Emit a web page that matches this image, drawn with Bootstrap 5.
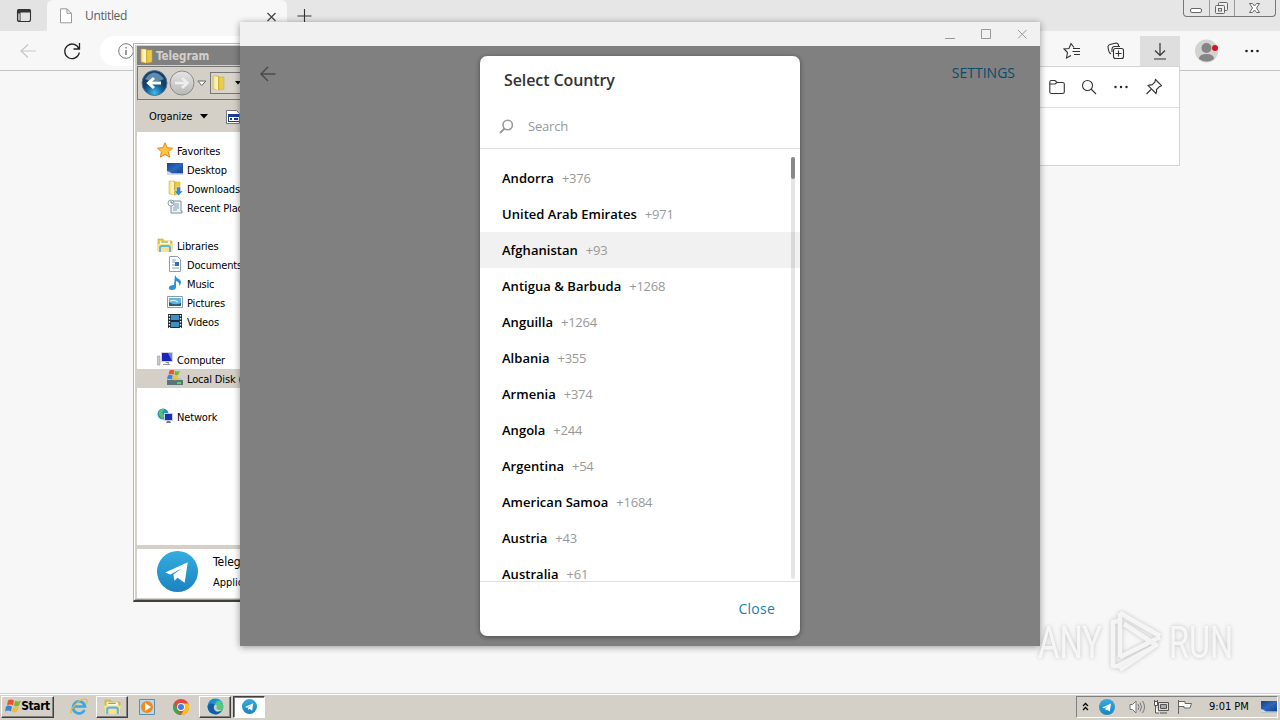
<!DOCTYPE html>
<html lang="en">
<head>
<meta charset="utf-8">
<meta name="viewport" content="width=device-width, initial-scale=1">
<title>Select Country</title>
<link href="https://cdn.jsdelivr.net/npm/bootstrap@5.3.0/dist/css/bootstrap.min.css" rel="stylesheet">
<style>
body{width:1280px;height:720px;background:#f7f7f7;font-family:"Open Sans",sans-serif;font-size:13px;line-height:1.2;color:#000}
svg{display:block;flex:none}
.ln{fill:none;stroke:#333;stroke-width:1.1}
/* browser */
.tabstrip{height:31px;background:#e6e6e6}
.tab-left{width:47px;background:#e3e3e3;border-bottom-right-radius:5px}
.tab-active{width:240px;background:#f7f7f7;border-radius:6px 6px 0 0;color:#5c5c5c;font-size:12px;padding:1px 10px 0 12px}
.tab-active span{letter-spacing:-.35px}
.caps{width:93px;height:17px;margin-right:4px;border:1px solid #777;border-top:0;border-radius:0 0 4px 4px}
.caps>div+div{border-left:1px solid #999}
.toolbar{height:40px;background:#f7f7f7;border-bottom:1px solid #c4c4c4}
.addr{width:800px;height:30px;border-radius:15px;background:#fff;padding-left:18px}
.dl-btn{width:40px;height:30px;background:#dedede}
.flyout{right:100px;top:66px;width:300px;height:100px;background:#fff;border:1px solid #d4d4d4}
.flyout-head{height:41px;border-bottom:1px solid #e0e0e0;padding:0 16px 1px 0}
/* file manager */
.explorer{left:133px;top:43px;width:400px;height:559px;background:#d4d0c8;border:1px solid #b9b6b0;border-bottom:2px solid #404040;padding:2px;font-family:"DejaVu Sans Condensed","DejaVu Sans",sans-serif;font-size:11px;box-shadow:inset 1px 1px #fff,inset 0 -1px #999}
.ex-title{height:19px;background:#808080;color:#d4d0c8;font:bold 11.500px "DejaVu Sans Condensed","DejaVu Sans",sans-serif;padding-left:2px;margin-left:1px}
.ex-nav{height:34px;margin:1px 0 0 1px;border:1px solid #777;border-right:0;padding-left:3px}
.ex-crumb{width:80px;height:22px;border:1px solid #777;border-right:0;background:#d8d4cc;margin-left:3px}
.ex-cmd{height:32px;padding:1px 0 0 13px}
.ex-pane{height:413px;background:#fff;padding-top:9px;margin-left:1px}
.ex-row{height:19px;letter-spacing:-.15px;white-space:nowrap}
.ex-row.sub-row{padding-left:30px}.ex-row.top-row{padding-left:20px}
.ex-row span{margin-left:4px;padding-top:2px}
.ex-row svg{margin-top:-1px}
.ex-row.picked{background:#d4d0c8}
.ex-det{height:49px;background:#fff;margin:4px 0 0 1px;padding-left:20px}
/* messenger */
.tg{left:240px;top:22px;width:800px;height:624px;background:#808080;box-shadow:0 1px 7px rgba(0,0,0,.4)}
.tg-title{height:24px;background:#f1f1f1;padding-right:9px}
.tg-set{color:#0b4a6a;font-size:14px;font-weight:500}
.picker{left:240px;top:34px;width:320px;height:580px;border-radius:7px;background:#fff;box-shadow:0 1px 5px rgba(0,0,0,.45)}
.pk-title{height:49px;padding-left:24px;font-size:16px;font-weight:600;letter-spacing:-.1px;color:#333}
.pk-search{height:44px;border-bottom:1px solid #e0e0e0;padding:0 0 0 19px;color:#999;letter-spacing:-.2px}
.pk-list{height:432px;padding-top:11px;overflow:hidden}
.pk-row{height:36px;padding:2px 0 0 22px;font-weight:600;letter-spacing:.03px;white-space:nowrap}
.pk-row small{font-size:13px;font-weight:400;letter-spacing:-.25px;color:#999;margin-left:8px}
.pk-row.hov{background:#f1f1f1}
.pk-bar{right:5px;top:8px;width:4px;height:422px;border-radius:2px;background:rgba(0,0,0,.1)}
.pk-bar div{height:22px;border-radius:2px;background:#888}
.pk-foot{height:55px;border-top:1px solid #e0e0e0;color:#1680b5;font-size:14px;font-weight:500;letter-spacing:.25px;padding-right:25px}
/* taskbar */
.taskbar{height:27px;background:#d4d0c8;border-top:1px solid #d4d0c8;box-shadow:inset 0 1px #fff;font-family:"DejaVu Sans Condensed","DejaVu Sans",sans-serif;font-size:11px;padding:1px 2px 2px 1px}
.tk{border:1px solid;border-color:#fff #404040 #404040 #fff;box-shadow:inset -1px -1px #808080;height:22px;width:32px}
.tk.on{background:#fff;border-color:#404040 #fff #fff #404040;box-shadow:inset 1px 1px #808080;margin-left:2px}
.tk.start{width:53px;font-weight:bold;font-size:12px;letter-spacing:-.4px}
.tray{width:202px;height:22px;border:1px solid;border-color:#808080 #fff #fff #808080;padding-left:5px}
.mark-any{left:1032px;top:604px}
</style>
</head>
<body class="position-relative overflow-hidden d-flex flex-column m-0">
<svg width="0" height="0" class="position-absolute">
<defs>
<linearGradient id="tgG" x2="0" y2="1"><stop stop-color="#35ade1"/><stop offset="1" stop-color="#1b83bf"/></linearGradient>
<linearGradient id="fo"><stop stop-color="#f7dc6b"/><stop offset=".5" stop-color="#fff2ae"/><stop offset="1" stop-color="#d9ad29"/></linearGradient>
<linearGradient id="scr" x2="1" y2="1"><stop stop-color="#163f86"/><stop offset=".5" stop-color="#2c68bd"/><stop offset="1" stop-color="#173f83"/></linearGradient>
<radialGradient id="bk" cy=".9"><stop stop-color="#3fc0ea"/><stop offset=".6" stop-color="#17679f"/><stop offset="1" stop-color="#123f6c"/></radialGradient>
<linearGradient id="gr" x2="0" y2="1"><stop stop-color="#e4e4e4"/><stop offset="1" stop-color="#b8b8b8"/></linearGradient>
<linearGradient id="edge" x2="1" y2="1"><stop stop-color="#1477c9"/><stop offset=".55" stop-color="#1ba8df"/><stop offset="1" stop-color="#58cf67"/></linearGradient>
<symbol id="plane" viewBox="0 0 40 40"><circle cx="20" cy="20" r="20" fill="url(#tgG)"/><path d="M8 21 30 11 27 31 20 26 17 29 16 23 24 17 13 23Z" fill="#fff"/></symbol>
<symbol id="folder" viewBox="0 0 16 16"><path d="M2 1h5l1 1v13l-6-1Z" fill="url(#fo)" stroke="#cfa52c" stroke-width=".5"/><path d="M8 2h5v12l-5 1Z" fill="#eccb4c" stroke="#cfa52c" stroke-width=".5"/><path d="M5 2h2v13l-2-1Z" fill="#fff6c5"/></symbol>
<symbol id="lib" viewBox="0 0 16 16"><path d="M1 2h5l1 2h8v10H1Z" fill="#ecca5a" stroke="#c79b2c" stroke-width=".6"/><path d="M3 4h10v4H3Z" fill="#fff8dc"/><path d="M4 5h7" stroke="#58a94b"/><path d="M0 7h16l-1 8H1Z" fill="#f8e28b"/><path d="M3 15v-4q0-2 2-2h6q2 0 2 2v4" fill="none" stroke="#63b4df" stroke-width="2"/></symbol>
<symbol id="screen" viewBox="0 0 16 14"><path d="M0 1h16v10.500H0Z" fill="url(#scr)"/><path d="M0 11.500h16v1H0Z" fill="#9cb8d9"/><path d="m0 9 3 1 2 2H0Z" fill="#c5d9ee"/></symbol>
<symbol id="flag" viewBox="0 0 16 16"><path d="M3 2q3-2 6 0L8 7Q5 5 2 7Z" fill="#e8542f"/><path d="M10 2q3 2 6 0l-2 5q-3 2-5 0Z" fill="#78b833"/><path d="M1 8q3-2 6 0l-1 5Q3 11 0 13Z" fill="#3c83d5"/><path d="M8 8q3 2 6 0l-2 5q-2 2-5 0Z" fill="#f6bd2b"/></symbol>
<symbol id="pc" viewBox="0 0 16 16"><path d="M.5 5H3v9H.5Z" fill="#c8ccd5" stroke="#888" stroke-width=".5"/><path d="M4 1h12v10H4Z" fill="#d2d5e0"/><path d="M5 2h10v8H5Z" fill="#1b25bb"/><path d="M11 2h4v8Z" fill="#6c86ee"/><path d="M8 11h4v2H6v1h8" fill="#8a90a5"/></symbol>
</defs></svg>

<div class="tabstrip d-flex flex-shrink-0">
  <div class="tab-left d-flex align-items-center ps-3"><svg width="16" height="15" viewBox="0 0 16 15"><rect x="1.500" y="1.500" width="13" height="12" rx="2" class="ln"/><path d="M1 3Q1 1 3 1h10q2 0 2 2v1.500H4.500v9H3q-2 0-2-2Z" fill="#333"/><path d="M2.300 5.500h1.400v7h-.9q-.5 0-.5-1Z" fill="#e3e3e3"/></svg></div>
  <div class="tab-active d-flex align-items-center"><svg width="14" height="16" viewBox="0 0 14 16" class="me-auto"><path d="M1.500.8h6.500l4.500 4.500v9.500h-11ZM8 .8v4.500h4.500" fill="#fff" stroke="#999"/></svg><span class="flex-grow-1 ps-2 ms-1">Untitled</span><svg width="11" height="11" viewBox="0 0 11 11"><path d="m1.500 2 8 8m0-8-8 8" stroke="#444" stroke-width="1.200"/></svg></div>
  <svg class="align-self-center ms-2" width="18" height="16" viewBox="0 0 18 16"><path d="M9.500 1v14M2.500 8h14" stroke="#333" stroke-width="1.100"/></svg>
  <div class="caps d-flex ms-auto">
    <div style="width:25px"><svg width="24" height="16"><rect x="6.500" y="8.500" width="11" height="4" rx="1.500" fill="#fff" stroke="#666"/></svg></div>
    <div style="width:25px"><svg width="24" height="16" fill="#eee" stroke="#666"><rect x="8.500" y="2.500" width="9" height="8" rx="1"/><rect x="5.500" y="5.500" width="9" height="8" rx="1"/><rect x="8.500" y="8.500" width="3" height="2.500"/></svg></div>
    <div class="flex-grow-1"><svg width="40" height="16"><path d="M14.500 3.500h3l2 2.500 2-2.500h3L21.500 8l3 4.500h-3l-2-2.500-2 2.500h-3l3-4.500Z" fill="#fff" stroke="#666"/></svg></div>
  </div>
</div>
<div class="toolbar d-flex align-items-center flex-shrink-0">
  <svg width="20" height="16" viewBox="0 0 20 16" style="margin-left:19px"><path d="M17 8H2m7-6.500L2 8l7 6.500" fill="none" stroke="#c7c7c7" stroke-width="1.200"/></svg>
  <svg width="20" height="20" viewBox="0 0 20 20" style="margin-left:23px"><path d="M17 8a7.300 7.300 0 1 0 .3 3.500M17.500 2v6h-6" fill="none" stroke="#222" stroke-width="1.300"/></svg>
  <div class="addr d-flex align-items-center" style="margin-left:18px"><svg width="16" height="16" viewBox="0 0 16 16"><circle cx="8" cy="8" r="7.300" fill="none" stroke="#777"/><path d="M8 7v5M8 4v1.500" stroke="#666" stroke-width="1.300"/></svg></div>
  <div class="d-flex align-items-center ms-auto">
    <svg width="18" height="18" viewBox="0 0 18 18" class="ln" style="margin-right:26px"><path d="M11 5.500 8 1.500 6 6.500 1 7l3.500 3.500-1 5.500L8 13.500M10 6.500h7M9.500 9.500H17M11 12.500h6"/></svg>
    <svg width="18" height="18" viewBox="0 0 18 18" class="ln" style="margin-right:15px"><rect x="6.500" y="6.500" width="10" height="10" rx="2"/><path d="M4 12Q2 11 1.500 8L1 4.500Q1 3 3 2.500l6-1.500q2 0 2.500 2v1M5 10V7q0-2 2-2.500h6M11.500 8.500v6M8.500 11.500h6"/></svg>
    <div class="dl-btn d-flex align-items-center justify-content-center"><svg width="16" height="18" viewBox="0 0 16 18"><path d="M8 1v12M3 8.500l5 5 5-5M2 17h12" fill="none" stroke="#333" stroke-width="1.200"/></svg></div>
    <svg width="24" height="24" viewBox="0 0 24 24" style="margin:0 25px 0 15px"><circle cx="11.500" cy="12" r="11.500" fill="#d3d3d0"/><circle cx="11.500" cy="9" r="5" fill="#858585"/><path d="M4 20q0-5 7.500-5t7.500 5q-7 5-15 0Z" fill="#858585"/><circle cx="20" cy="9" r="3" fill="#dc1020"/></svg>
    <svg width="16" height="4" viewBox="0 0 16 4" fill="#222" style="margin-right:20px"><circle cx="2.500" cy="2" r="1.300"/><circle cx="8" cy="2" r="1.300"/><circle cx="13.500" cy="2" r="1.300"/></svg>
  </div>
</div>
<div class="flex-grow-1"></div>

<div class="flyout position-absolute">
  <div class="flyout-head d-flex align-items-center justify-content-end gap-3">
    <svg width="16" height="16" viewBox="0 0 16 16" class="ln"><path d="M.8 4V3q0-1.500 1.500-1.500H6L8 3.500h5.500q1.800 0 1.800 1.500v8q0 1.500-1.800 1.500h-11Q.8 14.500.8 13ZM1 5h5l2-1.500"/></svg>
    <svg width="16" height="16" viewBox="0 0 16 16" class="ln"><circle cx="6.500" cy="6.500" r="5"/><path d="m10 10 5 5"/></svg>
    <svg width="16" height="4" viewBox="0 0 16 4" fill="#222"><circle cx="2.500" cy="2" r="1.200"/><circle cx="8" cy="2" r="1.200"/><circle cx="13.500" cy="2" r="1.200"/></svg>
    <svg width="18" height="18" viewBox="0 0 18 18" class="ln"><path d="m10.500 1.500 6 6q-.5 1-2 1l-3 3q.5 2-.5 4l-8-8q2-1 4-.5l3-3q0-1.500.5-2.500ZM6 11.500l-4.500 4.500"/></svg>
  </div>
</div>

<div class="explorer position-absolute">
  <div class="ex-title d-flex align-items-center"><svg width="16" height="16"><use href="#folder"/></svg><span style="margin-left:1px">Telegram</span></div>
  <div class="ex-nav d-flex align-items-center">
    <svg width="54" height="28" viewBox="0 0 54 28"><circle cx="13.500" cy="14" r="12.500" fill="url(#bk)" stroke="#54738a"/><path d="M4 10Q13-3 23 10q-10 5-19 0" fill="#9cc9e0" opacity=".55"/><path d="M20 14H8m5-5-5.500 5 5.500 5" fill="none" stroke="#fff" stroke-width="3"/><circle cx="41" cy="14" r="12" fill="url(#gr)" stroke="#8b8b8b"/><path d="M34 14h12m-5-5 5.500 5-5.500 5" fill="none" stroke="#eee" stroke-width="2.500"/></svg>
    <svg width="10" height="7" viewBox="0 0 10 7" style="margin-left:2px"><path d="M.8 1h8L4.800 5.500Z" fill="#fff" stroke="#666"/></svg>
    <div class="ex-crumb d-flex align-items-center"><svg width="16" height="16"><use href="#folder"/></svg><svg width="6" height="4" class="ms-2"><path d="M0 0h6L3 3.500Z"/></svg></div>
  </div>
  <div class="ex-cmd d-flex align-items-center"><span style="letter-spacing:-.15px">Organize</span><svg width="8" height="5" class="ms-2"><path d="M0 0h8L4 4.500Z"/></svg>
    <svg width="16" height="16" viewBox="0 0 16 16" style="margin-left:17px"><path d="M1.500 1.500h10l3 3v10h-13Z" fill="#fff" stroke="#777"/><rect x="3" y="5" width="11" height="8" fill="#1e3f98"/><path d="M4 8h10v4H4Z" fill="#fff"/><path d="M5 10h2m2 0h2m1-1v2" stroke="#1e3f98" stroke-width="2"/></svg></div>
  <div class="ex-pane">
    <div class="ex-row top-row d-flex align-items-center"><svg width="16" height="16" viewBox="0 0 16 16"><path d="m8 .8 2.200 4.900 5.300.5-4 3.600 1.200 5.400L8 12.400l-4.700 2.800 1.200-5.400-4-3.600 5.300-.5Z" fill="#ffc43d" stroke="#e58320"/></svg><span>Favorites</span></div>
    <div class="ex-row sub-row d-flex align-items-center"><svg width="16" height="14"><use href="#screen"/></svg><span>Desktop</span></div>
    <div class="ex-row sub-row d-flex align-items-center"><svg width="16" height="16"><use href="#folder"/><path d="M9.500 7h4v4H16l-4.500 4.500L7 11h2.500Z" fill="#2d8cd7" stroke="#fff" stroke-width=".4"/></svg><span>Downloads</span></div>
    <div class="ex-row sub-row d-flex align-items-center"><svg width="16" height="16" viewBox="0 0 16 16"><path d="M5 2h9v10h1v2H4V4" fill="#eef5fa" stroke="#7d8e98"/><path d="M7 5h5M7 7h5M6 9h6M6 11h4" stroke="#7f9bab"/><circle cx="4" cy="4" r="3" fill="#fff" stroke="#8ba0ab"/><path d="M4 2v2h2" fill="none" stroke="#4b7c9c"/></svg><span>Recent Places</span></div>
    <div class="ex-row"></div>
    <div class="ex-row top-row d-flex align-items-center"><svg width="16" height="16"><use href="#lib"/></svg><span>Libraries</span></div>
    <div class="ex-row sub-row d-flex align-items-center"><svg width="16" height="16" viewBox="0 0 16 16"><path d="M2.500.5h8l3 3v12h-11Z" fill="#fff" stroke="#8d9dad"/><path d="M5 4h4M5 6h3M5 9h3M5 12h7" stroke="#82a2bf"/><path d="M8 6h4v4H8Z" fill="#3a70a8"/></svg><span>Documents</span></div>
    <div class="ex-row sub-row d-flex align-items-center"><svg width="16" height="16" viewBox="0 0 16 16"><path d="M8 0q1 3 4 4 4 3 0 7 1-4-3-5v6q0 3-4 3-4 0-3-3 1-2 5-2Z" fill="#2a92d7"/></svg><span>Music</span></div>
    <div class="ex-row sub-row d-flex align-items-center"><svg width="16" height="16" viewBox="0 0 16 16"><path d="M.5 2.500h15v11H.5Z" fill="#fff" stroke="#8a9caf"/><path d="M2 4h12v8H2Z" fill="#65b5dd"/><path d="M2 8q5 4 12 1v3H2Z" fill="#255f79"/><path d="M3 7q4-2 8 1" fill="none" stroke="#e5f4fb"/></svg><span>Pictures</span></div>
    <div class="ex-row sub-row d-flex align-items-center"><svg width="16" height="16" viewBox="0 0 16 16"><path d="M1 1h14v14H1Z" fill="#1e2c38"/><path d="M4 2h8v5H4Zm0 7h8v5H4Z" fill="#3d91c5"/><path d="M2.500 2v13M13.500 2v13" stroke="#fff" stroke-width="1.300" stroke-dasharray="1.500 1.500"/></svg><span>Videos</span></div>
    <div class="ex-row"></div>
    <div class="ex-row top-row d-flex align-items-center"><svg width="16" height="16"><use href="#pc"/></svg><span>Computer</span></div>
    <div class="ex-row sub-row picked d-flex align-items-center"><svg width="16" height="16" viewBox="0 0 16 16"><path d="M0 10h16v5H0Z" fill="#59747b"/><path d="M1 10h14l-1-2H3Z" fill="#b4c6c8"/><path d="M10 12h4v2h-4Z" fill="#5fd05a"/><use href="#flag" x="0" y="-1" width="13" height="13"/></svg><span>Local Disk (C:)</span></div>
    <div class="ex-row"></div>
    <div class="ex-row top-row d-flex align-items-center"><svg width="16" height="16" viewBox="0 0 16 16"><circle cx="6" cy="6" r="5.500" fill="#2c91bd"/><path d="M2 3q3-3 5-2L5 5l3 3-3 3-3-4Z" fill="#5ac16c"/><path d="M7 5h9v8H7Z" fill="#c8d0e8"/><path d="M8 6h7v6H8Z" fill="#1931b8"/><path d="M9 15h5l-1-2h-3Z" fill="#777"/></svg><span>Network</span></div>
  </div>
  <div class="ex-det d-flex"><svg width="41" height="41" style="margin-top:2px"><use href="#plane"/></svg><div style="margin-left:15px;padding-top:7px"><div style="font-size:12px;line-height:13px">Telegram</div><div class="mt-1 pt-1" style="line-height:12px">Application</div></div></div>
</div>

<div class="tg position-absolute">
  <div class="tg-title d-flex align-items-center justify-content-end">
    <svg width="90" height="18" viewBox="0 0 90 18" fill="none" stroke="#999"><path d="M4 13.500h10M40.500 4.500h9v9h-9ZM77 5l8.500 8.500M85.500 5 77 13.500"/></svg>
  </div>
  <div class="d-flex align-items-center justify-content-between" style="height:55px;padding:0 25px 0 19px">
    <svg width="17" height="16" viewBox="0 0 17 16"><path d="M16.500 8H2m7-7L2 8l7 7" fill="none" stroke="#4b4b4b" stroke-width="1.500"/></svg>
    <span class="tg-set">SETTINGS</span>
  </div>
  <div class="picker position-absolute">
    <div class="pk-title d-flex align-items-center">Select Country</div>
    <div class="pk-search d-flex align-items-center"><svg width="15" height="15" viewBox="0 0 15 15"><circle cx="8.700" cy="6" r="4.700" fill="none" stroke="#999" stroke-width="1.600"/><path d="m5.500 9.500-4.500 4.500" stroke="#999" stroke-width="2"/></svg><span style="margin-left:14px">Search</span></div>
    <div class="pk-list position-relative">
      <div class="pk-row d-flex align-items-center">Andorra<small>+376</small></div>
      <div class="pk-row d-flex align-items-center">United Arab Emirates<small>+971</small></div>
      <div class="pk-row hov d-flex align-items-center">Afghanistan<small>+93</small></div>
      <div class="pk-row d-flex align-items-center">Antigua &amp; Barbuda<small>+1268</small></div>
      <div class="pk-row d-flex align-items-center">Anguilla<small>+1264</small></div>
      <div class="pk-row d-flex align-items-center">Albania<small>+355</small></div>
      <div class="pk-row d-flex align-items-center">Armenia<small>+374</small></div>
      <div class="pk-row d-flex align-items-center">Angola<small>+244</small></div>
      <div class="pk-row d-flex align-items-center">Argentina<small>+54</small></div>
      <div class="pk-row d-flex align-items-center">American Samoa<small>+1684</small></div>
      <div class="pk-row d-flex align-items-center">Austria<small>+43</small></div>
      <div class="pk-row d-flex align-items-center">Australia<small>+61</small></div>
      <div class="pk-bar position-absolute"><div></div></div>
    </div>
    <div class="pk-foot d-flex align-items-center justify-content-end">Close</div>
  </div>
</div>

<svg class="mark-any position-absolute" width="240" height="76" viewBox="0 0 240 76" style="filter:drop-shadow(0 0 2px rgba(0,0,0,.28))">
  <g fill="#fff" fill-opacity=".75" font-family="Roboto,sans-serif" font-size="45"><text x="6" y="54" textLength="64" lengthAdjust="spacingAndGlyphs">ANY</text><text x="137" y="54" textLength="64" lengthAdjust="spacingAndGlyphs">RUN</text></g>
  <path d="M86 17l-5 1v44h5l34-18M88 9v44M88 9l40 23M61 0M88 53l40-20M92 20l32 21-36 25" fill="none" stroke="#fff" stroke-opacity=".75" stroke-width="4.500" stroke-linejoin="round"/>
</svg>

<div class="taskbar d-flex align-items-center flex-shrink-0 position-relative">
  <div class="tk start d-flex align-items-center justify-content-center"><svg width="16" height="17"><use href="#flag"/></svg><span>Start</span></div>
  <svg width="18" height="18" viewBox="0 0 18 18" style="margin:0 8px 0 16px"><path d="M14.500 12A6 6 0 1 1 15 8.500H4" fill="none" stroke="#3da7e0" stroke-width="2.700"/><path d="M2 15Q-2 15 5 7T17 2q1 1-1 4" fill="none" stroke="#e9b932" stroke-width="1.200"/></svg>
  <div class="tk d-flex align-items-center justify-content-center"><svg width="17" height="17"><use href="#lib"/></svg></div>
  <svg width="16" height="16" viewBox="0 0 16 16" style="margin-left:11px"><path d="M.5.5h15v15H.5Z" fill="#b8d8ef" stroke="#5c8eb5"/><circle cx="8" cy="8" r="6" fill="#f08a1e"/><path d="m6 4 6 4-6 4Z" fill="#fff"/></svg>
  <svg width="16" height="16" viewBox="0 0 16 16" style="margin:0 10px 0 18px"><circle cx="8" cy="8" r="8" fill="#e4483b"/><path d="M1 4.500 6 13l2 3A8 8 0 0 1 1 4.500Z" fill="#35a852"/><path d="M8 4.500h7.300A8 8 0 0 1 8 16l3.500-6Z" fill="#fbc116"/><circle cx="8" cy="8" r="4" fill="#fff"/><circle cx="8" cy="8" r="3" fill="#3c7de8"/></svg>
  <div class="tk d-flex align-items-center justify-content-center"><svg width="17" height="17" viewBox="0 0 17 17"><circle cx="8.500" cy="8.500" r="8" fill="url(#edge)"/><path d="M.5 8q3-4 7-1.500-2 4 1 6.500 3 1.500 6-.5-2 4-6 4-8-1-8-8.500" fill="#135ca8"/><path d="M8 7q2-1 2 1.500-1 2 1 2.700 4 1 5.500-2.200L14 3Q9 2 8 7" fill="#54ca78"/><path d="M7.500 7q2.500-1 2.500 1.500-1.500 2 1 3 2 .8 4 0-3 3-6 1.500-3-2-1.500-6" fill="#d4d0c8"/></svg></div>
  <div class="tk on d-flex align-items-center justify-content-center"><svg width="15" height="15"><use href="#plane"/></svg></div>
  <div class="tray d-flex align-items-center ms-auto">
    <svg width="7" height="9" viewBox="0 0 7 9" fill="none" stroke="#000" stroke-width="1.300"><path d="M1 4l2.500-2.500L6 4M1 8l2.500-2.500L6 8"/></svg>
    <svg width="16" height="16" style="margin-left:10px"><use href="#plane"/></svg>
    <svg width="17" height="16" viewBox="0 0 17 16" style="margin-left:14px" fill="none" stroke="#777"><path d="M1 5.500h2.500L7 2v12l-3.500-3.500H1ZM9 5q2 3 0 6" fill="#fff"/><path d="M11 3.500q3 4.500 0 9M13.500 2q4 6 0 12"/></svg>
    <svg width="17" height="16" viewBox="0 0 17 16" style="margin-left:7px" stroke="#555"><path d="M5.500 3.500h10v8h-10Z" fill="#ddd"/><path d="M7.500 5.500h6v4h-6Z" fill="#aaa"/><path d="M7 14h7M2.500 7v7H6M1.500 2.500h3v4h-3ZM1.500 1v2m3-2v2" fill="#fff"/></svg>
    <svg width="17" height="16" viewBox="0 0 17 16" style="margin-left:6px"><path d="M2.500 1v14M3 2.500h6v2h6.500L14 9H8V7.500H3" fill="#fff" stroke="#666"/></svg>
    <span style="margin-left:16px">9:01 PM</span>
    <svg width="16" height="14" class="ms-auto me-0"><use href="#screen"/></svg>
  </div>
</div>
<script src="https://cdn.jsdelivr.net/npm/bootstrap@5.3.0/dist/js/bootstrap.bundle.min.js"></script>
</body>
</html>
